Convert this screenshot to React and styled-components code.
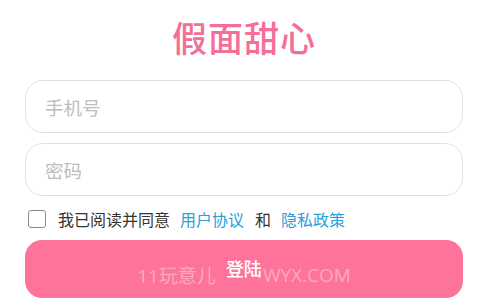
import React from "react";
import styled, { createGlobalStyle } from "styled-components";

const GlobalStyle = createGlobalStyle`
  html, body {
    margin: 0;
    padding: 0;
    background: #fff;
    font-family: "Noto Sans CJK SC", "Noto Sans", sans-serif;
  }
  * { box-sizing: border-box; }
`;

const Page = styled.div`
  width: 485px;
  height: 298px;
  overflow: hidden;
  padding: 0 22px 0 25px;
  display: flex;
  flex-direction: column;
`;

const Title = styled.h1`
  margin: 14px 0 0;
  height: 46px;
  line-height: 46px;
  text-align: center;
  font-size: 35px;
  font-weight: 500;
  color: #f46f98;
  letter-spacing: 1px;
`;

const Field = styled.div`
  margin-top: ${(p) => p.$top}px;
  height: 55px;
  border: 1.5px solid #e0e0e0;
  border-radius: 18px;
  display: flex;
  align-items: center;
  padding-left: 19px;
  font-size: 18.5px;
  color: #bdbdbd;
`;

const Agree = styled.div`
  margin-top: 13px;
  height: 20px;
  display: flex;
  align-items: center;
  font-size: 16px;
  color: #333;
`;

const Check = styled.span`
  width: 18px;
  height: 18px;
  margin: 0 12px 0 3px;
  border: 1.5px solid #8a8a8a;
  border-radius: 3px;
`;

const Link = styled.span`
  color: #27a0dc;
  margin: 0 ${(p) => p.$gap}px 0 10px;
`;

const Button = styled.button`
  margin-top: 11px;
  height: 58px;
  flex-shrink: 0;
  border: none;
  border-radius: 17px;
  background: #fd7399;
  display: flex;
  align-items: center;
  justify-content: center;
  padding: 0;
  font-family: inherit;
  color: #fff;
`;

const Label = styled.span`
  font-size: 18px;
  font-weight: 500;
  margin: 0 1px 2px 10px;
`;

const Watermark = styled.span`
  font-family: "Open Sans", "Noto Sans CJK SC", sans-serif;
  font-size: 19px;
  margin-top: 12px;
  color: rgba(255, 255, 255, 0.4);
  white-space: nowrap;
`;

export default function App() {
  return (
    <>
      <GlobalStyle />
      <Page>
        <Title>假面甜心</Title>
        <Field $top={20}>手机号</Field>
        <Field $top={10}>密码</Field>
        <Agree>
          <Check />
          我已阅读并同意
          <Link $gap={11}>用户协议</Link>
          和
          <Link $gap={0}>隐私政策</Link>
        </Agree>
        <Button>
          <Watermark>11玩意儿</Watermark>
          <Label>登陆</Label>
          <Watermark>WYX.COM</Watermark>
        </Button>
      </Page>
    </>
  );
}
